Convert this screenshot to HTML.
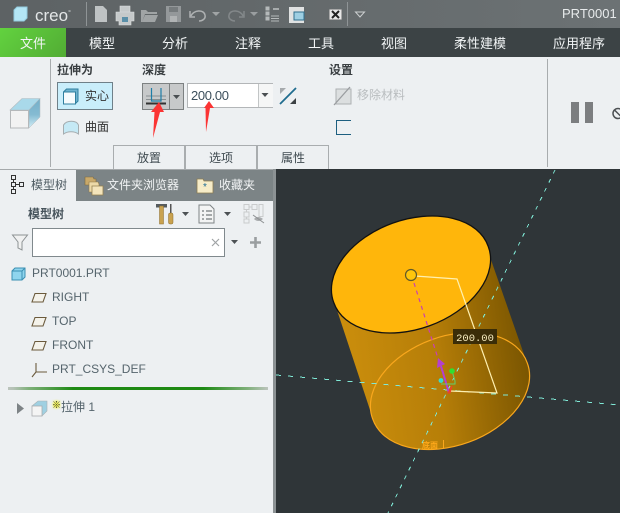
<!DOCTYPE html>
<html><head><meta charset="utf-8">
<style>
html,body{margin:0;padding:0}
body{width:620px;height:513px;overflow:hidden;position:relative;background:#2f3538;font-family:"Liberation Sans","Noto Sans CJK SC",sans-serif;font-size:12px;color:#3f4a50}
.a{position:absolute;white-space:nowrap}
svg{position:absolute;overflow:visible}
.m{position:absolute;top:35px;font-size:13px;line-height:18px;color:#f2f5f6;white-space:nowrap}
.t{position:absolute;top:145px;height:24px;width:72px;border:1px solid #a9adaf;border-bottom:0;box-sizing:border-box;text-align:center;line-height:25px;background:#edf0f2}
.tree{position:absolute;left:52px;line-height:16px;color:#55646c;font-size:12px;white-space:nowrap}
</style></head><body>

<!-- Title bar -->
<div class="a" style="left:0;top:0;width:620px;height:28px;background:linear-gradient(90deg,#5d6264,#6c7274)"></div>
<svg style="left:0;top:0" width="620" height="28">
 <path d="M14 10l3-3h10v11l-3 3H14z" fill="#b4e6f5" stroke="#93cbde"/>
 <path d="M86.500 2v24M347.500 2v24" stroke="#8f9496" stroke-width="1"/>
 <path d="M95 6h8l4 4v12H95z" fill="#bfc3c4"/>
 <path d="M120 6h10v6h-10zM116 12h18v9h-3v4h-12v-4h-3z" fill="#c5c9ca" stroke="#dcdfe0" stroke-width=".6"/><rect x="122" y="17" width="6" height="5" fill="#5a8fa8"/>
 <path d="M141 22V10h5l2 2h9v2h-12l-3 8zM142 22l3-7h13l-3 7z" fill="#a0a4a5"/>
 <path d="M166 6h15v16h-15z" fill="#94989a"/><rect x="169" y="7" width="9" height="5" fill="#767b7d"/><rect x="170" y="16" width="7" height="6" fill="#b0b3b4"/>
 <path d="M190 11v6h5M191 16c2-6 13-7 14-1 1 4-3 6-6 6" fill="none" stroke="#aeb1b2" stroke-width="1.500"/>
 <path d="M212 12h8l-4 4z" fill="#a0a4a5"/>
 <path d="M244 11v6h-5M243 16c-2-6-13-7-14-1-1 4 3 6 6 6" fill="none" stroke="#83888a" stroke-width="1.500"/>
 <path d="M250 12h8l-4 4z" fill="#9a9ea0"/>
 <path d="M266 7h3v3h-3zM266 12h3v3h-3zM266 17h3v3h-3zM271 16h8M271 18.500h8M271 21h8" stroke="#b5b9ba" fill="#b5b9ba"/><path d="M273 9h6" stroke="#a7abac" stroke-width="2"/>
 <rect x="289" y="7" width="15" height="16" fill="#e0e2e2"/><rect x="294" y="12" width="10" height="8" fill="#9ecfe3" stroke="#2f6f8e"/>
 <rect x="329.500" y="9.500" width="12" height="10" rx="1" fill="#e8e8e8" stroke="#a9a9a9"/><path d="M332 11l7 7M339 11l-7 7" stroke="#222" stroke-width="2"/>
 <path d="M355.500 12h9l-4.500 5z" fill="none" stroke="#cdd0d1"/>
</svg>
<div class="a" style="left:35px;top:3px;font-size:17px;line-height:22px;color:#e3e6e7">creo<span style="font-size:7px;vertical-align:6px">°</span></div>
<div class="a" style="left:562px;top:6px;font-size:13px;line-height:16px;color:#e8ebec">PRT0001</div>

<!-- Menu bar -->
<div class="a" style="left:0;top:28px;width:620px;height:29px;background:#3c4345"></div>
<div class="a" style="left:0;top:28px;width:66px;height:29px;background:linear-gradient(135deg,#62d23f,#52ac34)"></div>
<div class="m" style="left:20px">文件</div><div class="m" style="left:89px">模型</div><div class="m" style="left:162px">分析</div><div class="m" style="left:235px">注释</div><div class="m" style="left:308px">工具</div><div class="m" style="left:381px">视图</div><div class="m" style="left:454px">柔性建模</div><div class="m" style="left:553px">应用程序</div>

<!-- Ribbon -->
<div class="a" style="left:0;top:57px;width:620px;height:112px;background:#edf0f2"></div>
<div class="a" style="left:50px;top:59px;width:1px;height:108px;background:#a8acae"></div>
<div class="a" style="left:547px;top:59px;width:1px;height:108px;background:#a8acae"></div>
<div class="a" style="left:57px;top:62px;font-weight:bold;line-height:16px;color:#3a3f42">拉伸为</div>
<div class="a" style="left:142px;top:62px;font-weight:bold;line-height:16px;color:#3a3f42">深度</div>
<div class="a" style="left:329px;top:62px;font-weight:bold;line-height:16px;color:#3a3f42">设置</div>

<svg style="left:0;top:80px" width="120" height="70">
 <defs><linearGradient id="rf" x1="0" y1="0" x2="0" y2="1"><stop offset="0" stop-color="#74aec8"/><stop offset=".55" stop-color="#85bbd2"/><stop offset="1" stop-color="#d3eef7"/></linearGradient></defs>
 <path d="M10 30L22 18.500h18L29 30z" fill="#a9d9ea" stroke="#b4bcc0" stroke-width=".6"/>
 <path d="M29 30L40 18.500V37L29 48z" fill="url(#rf)" stroke="#b4bcc0" stroke-width=".5"/>
 <rect x="10.500" y="30.500" width="18" height="17.500" fill="#f2f2f2" stroke="#b5b8ba"/>
</svg>
<div class="a" style="left:57px;top:82px;width:56px;height:28px;box-sizing:border-box;background:#c9eefb;border:1px solid #6f8089"></div>
<svg style="left:57px;top:82px" width="56" height="28">
 <path d="M6.500 10l3-3h11.500v12l-3 3H6.500z" fill="#6fb3cf" stroke="#2f7f9f" stroke-width="1"/>
 <rect x="6.500" y="10" width="12" height="12" fill="#f6fbfd" stroke="#2f7f9f"/>
</svg>
<div class="a" style="left:85px;top:88px;line-height:16px;color:#333">实心</div>
<svg style="left:63px;top:120px" width="18" height="16">
 <path d="M.5 14V5c3-5 13-5 15 0v9c-4-3-11-3-15 0z" fill="#c5e9f5" stroke="#a5adb0"/>
</svg>
<div class="a" style="left:85px;top:119px;line-height:16px;color:#333">曲面</div>

<div class="a" style="left:142px;top:83px;width:42px;height:27px;box-sizing:border-box;background:#c7c9ca;border:1px solid #7d8182"></div>
<div class="a" style="left:169px;top:83px;width:1px;height:27px;background:#7d8182"></div>
<svg style="left:142px;top:83px" width="42" height="27">
 <path d="M4 13h20M4 16.500h20" stroke="#8a9092" stroke-width="1.100"/>
 <path d="M4 20.500h20" stroke="#333" stroke-width="2"/>
 <path d="M9.500 5v13h9.500V5" fill="none" stroke="#1f7ea8" stroke-width="1.200"/>
 <path d="M31 12h7l-3.500 4z" fill="#4a4f52"/>
</svg>
<div class="a" style="left:187px;top:83px;width:86px;height:25px;box-sizing:border-box;background:#fff;border:1px solid #b3b6b8"></div>
<div class="a" style="left:258px;top:84px;width:14px;height:23px;background:#f5f6f6;border-left:1px solid #c2c5c6"></div>
<svg style="left:258px;top:84px" width="15" height="23"><path d="M3.500 9h7L7 13z" fill="#4a4f52"/></svg>
<div class="a" style="left:191px;top:87px;font-size:13px;letter-spacing:-.35px;line-height:17px;color:#3c4f5c">200.00</div>
<svg style="left:279px;top:87px" width="20" height="20">
 <path d="M1 17L17 1" stroke="#1f6c8f" stroke-width="1.800"/>
 <path d="M1 1h6L1 7z" fill="#a6aaad"/><path d="M17 17h-6l6-6z" fill="#3d4245"/>
</svg>
<svg style="left:333px;top:86px" width="22" height="20">
 <rect x="3" y="3" width="15" height="15" fill="#dcdfe0" stroke="#adb0b2"/>
 <path d="M1 19L17 1" stroke="#9a9da0" stroke-width="1.300"/>
</svg>
<div class="a" style="left:357px;top:87px;line-height:16px;color:#b9bdbf">移除材料</div>
<svg style="left:336px;top:120px" width="16" height="16"><path d="M15 .500H.500v14H15" fill="none" stroke="#1d5f80" stroke-width="1"/></svg>
<div class="a" style="left:571px;top:102px;width:8px;height:21px;background:#7c7e80"></div>
<div class="a" style="left:585px;top:102px;width:8px;height:21px;background:#7c7e80"></div>
<svg style="left:611px;top:107px" width="9" height="13"><circle cx="7" cy="6.500" r="5" fill="none" stroke="#4c5053" stroke-width="1.500"/><path d="M3.500 3l7 7" stroke="#4c5053" stroke-width="1.500"/></svg>

<div class="t" style="left:113px">放置</div>
<div class="t" style="left:185px">选项</div>
<div class="t" style="left:257px">属性</div>

<svg style="left:0;top:0;" width="620" height="170">
 <path d="M159 102L164 112 160 112 153 138 154.500 112 151 112z" fill="#fb3434"/>
 <path d="M209 101L214 108 210 108 206 132 205.500 108 204 108z" fill="#fb3434"/>
</svg>

<!-- Left panel -->
<div class="a" style="left:0;top:169px;width:273px;height:344px;background:#edf0f2;border-top:1px solid #a5a9ab;box-sizing:border-box"></div>
<div class="a" style="left:76px;top:170px;width:197px;height:31px;background:#7c8486"></div>
<div class="a" style="left:273px;top:169px;width:3px;height:344px;background:#8c9294"></div>
<svg style="left:10px;top:174px" width="16" height="20">
 <path d="M1.500 1.500h4v4h-4zM1.500 8.500h4v4h-4zM1.500 15.500h4v4h-4zM9.500 8.500h4v4h-4zM3.500 5.500v3M3.500 12.500v3M5.500 10.500h4" fill="none" stroke="#333"/>
</svg>
<div class="a" style="left:31px;top:177px;line-height:16px;color:#4e5b62">模型树</div>
<svg style="left:84px;top:176px" width="20" height="20">
 <path d="M1 1h8l1 2h2v6H1z" fill="#c9a96a" stroke="#7f6a40" stroke-width=".6"/>
 <path d="M5 6h9l1 2v8H5z" fill="#ecd9a8" stroke="#8f7a4a" stroke-width=".6"/>
 <path d="M8 10h11v9H8z" fill="#f3e4bb" stroke="#94804f" stroke-width=".8"/>
</svg>
<div class="a" style="left:107px;top:177px;line-height:16px;color:#f2f4f5">文件夹浏览器</div>
<svg style="left:196px;top:177px" width="18" height="16">
 <path d="M1 2h6l1 2h9v12H1z" fill="#f6ecc8" stroke="#8d7c50" stroke-width=".8"/>
 <text x="9" y="13" font-size="10" fill="#1d6c94" text-anchor="middle" font-family="Liberation Sans">*</text>
</svg>
<div class="a" style="left:219px;top:177px;line-height:16px;color:#f2f4f5">收藏夹</div>

<div class="a" style="left:28px;top:206px;font-weight:bold;line-height:16px;color:#47545c">模型树</div>
<svg style="left:155px;top:203px" width="24" height="22">
 <path d="M1 1h11v3.500H1z" fill="#555b5e"/>
 <rect x="4.500" y="3" width="4" height="18" fill="#c9a24f" stroke="#8a6d2f" stroke-width=".5"/>
 <rect x="15" y="1" width="1.500" height="9" fill="#555"/>
 <rect x="13.500" y="10" width="4.500" height="11" rx="1.500" fill="#c9a24f" stroke="#8a6d2f" stroke-width=".5"/>
</svg>
<svg style="left:198px;top:204px" width="18" height="20">
 <path d="M1 1h11l4 4v14H1z" fill="#f3f4f4" stroke="#7e8486"/>
 <path d="M4 7h2M8 7h6M4 11h2M8 11h6M4 15h2M8 15h6" stroke="#555b5e"/>
</svg>
<svg style="left:182px;top:212px" width="56" height="6"><path d="M0 0h7L3.500 4zM42 0h7l-3.500 4z" fill="#4d5255"/></svg>
<svg style="left:243px;top:204px" width="22" height="20">
 <path d="M1 .5h5v5H1zM1 8h5v5H1zM1 15h5v4H1zM9 .5h5v5H9zM16 .5h4v12h-4zM6 3h3M3.500 5.500V8M3.500 13v2" fill="none" stroke="#c9cbcc"/>
 <path d="M11 15q4-4 9 0q-5 4-9 0z" fill="#a9acae"/><path d="M10 11l11 8" stroke="#8e9193"/>
</svg>
<svg style="left:12px;top:234px" width="17" height="17"><path d="M.5 1h15L10 8v8l-4-2V8z" fill="#f0f1f1" stroke="#8d9294" stroke-width="1"/></svg>
<div class="a" style="left:32px;top:228px;width:193px;height:29px;box-sizing:border-box;background:#fff;border:1px solid #80898d"></div>
<svg style="left:211px;top:238px" width="9" height="9"><path d="M1 1l7 7M8 1l-7 7" stroke="#a0a3a5" stroke-width="1.200"/></svg>
<svg style="left:231px;top:240px" width="8" height="5"><path d="M0 0h7L3.500 4z" fill="#4d5255"/></svg>
<svg style="left:250px;top:237px" width="11" height="11"><path d="M5.500 0v11M0 5.500h11" stroke="#9a9ea0" stroke-width="2.600"/></svg>

<svg style="left:11px;top:267px" width="15" height="14">
 <path d="M1 4l3-3h10v9l-3 3H1z" fill="#8fd5ee" stroke="#3b8fb2"/><path d="M1 4h10v9M11 4l3-3" fill="none" stroke="#3b8fb2"/>
</svg>
<div class="tree" style="left:32px;top:265px">PRT0001.PRT</div>
<svg style="left:31px;top:291px" width="16" height="90">
 <g fill="#f4f2ea" stroke="#6b5a3c" stroke-width="1.100">
 <path d="M4 2.500h11L12 11H1z"/><path d="M4 26.500h11L12 35H1z"/><path d="M4 50.500h11L12 59H1z"/></g>
 <path d="M5 72v9h11M5 81l-4 5" fill="none" stroke="#6b5a3c" stroke-width="1.100"/>
</svg>
<div class="tree" style="top:289px">RIGHT</div>
<div class="tree" style="top:313px">TOP</div>
<div class="tree" style="top:337px">FRONT</div>
<div class="tree" style="top:361px">PRT_CSYS_DEF</div>
<div class="a" style="left:8px;top:387px;width:260px;height:3px;background:linear-gradient(90deg,#bcc4bd,#b5c2b6 2%,#7fb07a 8%,#1e8a14 25%,#1e8a14 75%,#7fb07a 92%,#bcc4bd)"></div>
<svg style="left:17px;top:403px" width="8" height="11"><path d="M0 0l7 5.500-7 5.500z" fill="#7d8386"/></svg>
<svg style="left:31px;top:400px" width="17" height="17">
 <path d="M1 6l6-5h9v10l-5 5z" fill="#9fd0e2" stroke="#a8b0b3" stroke-width=".6"/>
 <rect x="1" y="6" width="10" height="10" fill="#f4f4f4" stroke="#a8acae" stroke-width=".8"/>
</svg>
<div class="a" style="left:52px;top:400px;font-size:9px;line-height:10px;font-weight:bold;color:#333;text-shadow:0 0 2px #ff0,0 0 2px #ff0,0 0 2px #ff0">※</div>
<div class="a" style="left:61px;top:399px;line-height:16px;color:#55646c">拉伸 1</div>

<!-- Viewport -->
<svg style="left:0;top:0" width="620" height="513">
 <defs>
  <linearGradient id="g" gradientUnits="userSpaceOnUse" x1="335" y1="345" x2="530" y2="320">
   <stop offset="0" stop-color="#cc8f0d"/><stop offset=".5" stop-color="#b67e08"/><stop offset="1" stop-color="#755200"/>
  </linearGradient>
 </defs>
 <path d="M334 301L373 419L527 363L490 257Z" fill="url(#g)"/>
 <path d="M372.760 419.110A82.200 54 -20 1 1 527.240 362.890A82.200 54 -20 1 1 372.760 419.110Z" fill="url(#g)" stroke="#f9a71d" stroke-width="1.200"/>
 <path d="M333.760 302.610A82.200 54 -20 1 1 488.240 246.390A82.200 54 -20 1 1 333.760 302.610Z" fill="#ffb60b" stroke="#111" stroke-width="1.300"/>
 <path d="M555 170L388 513" stroke="#7fe9d6" stroke-width="1" stroke-dasharray="4 6" fill="none" shape-rendering="crispEdges"/>
 <path d="M276 375L620 405" stroke="#7fe9d6" stroke-width="1" stroke-dasharray="5 7" fill="none" shape-rendering="crispEdges"/>
 <path d="M414 283L449 393" stroke="#c93fb3" stroke-width="1.200" stroke-dasharray="4 4" fill="none"/>
 <path d="M415 276L457 279L497 393L450 391" fill="none" stroke="#fff0b0" stroke-width="1.200"/>
 <circle cx="411" cy="275" r="5.500" fill="#ffc60c" stroke="#5f5a2a" stroke-width="1.200"/>
 <path d="M449 393L441 366" stroke="#b43fd0" stroke-width="2"/>
 <path d="M438 358L445 364 437 368z" fill="#b43fd0"/>
 <path d="M452 371L455 381V384H441" fill="none" stroke="#5fd070" stroke-width="1"/>
 <circle cx="452" cy="371" r="2.800" fill="#2fe02f"/>
 <circle cx="441" cy="380.500" r="2.400" fill="#35dcd0"/>
 <path d="M448 393l4-7-2 7z" fill="#f0402a" stroke="#f0402a"/>
 <path d="M443.500 440v8" stroke="#f9a71d"/>
 <text x="422" y="448" font-size="8" font-weight="bold" font-family="Liberation Sans,Noto Sans CJK SC,sans-serif" fill="#ffa81a">底面</text>
 <rect x="453" y="329" width="44" height="15" fill="#3a2d08"/>
 <text x="475" y="341" font-size="10.500" text-anchor="middle" font-family="Liberation Mono,monospace" fill="#f7edc0">200.00</text>
</svg>
</body></html>
